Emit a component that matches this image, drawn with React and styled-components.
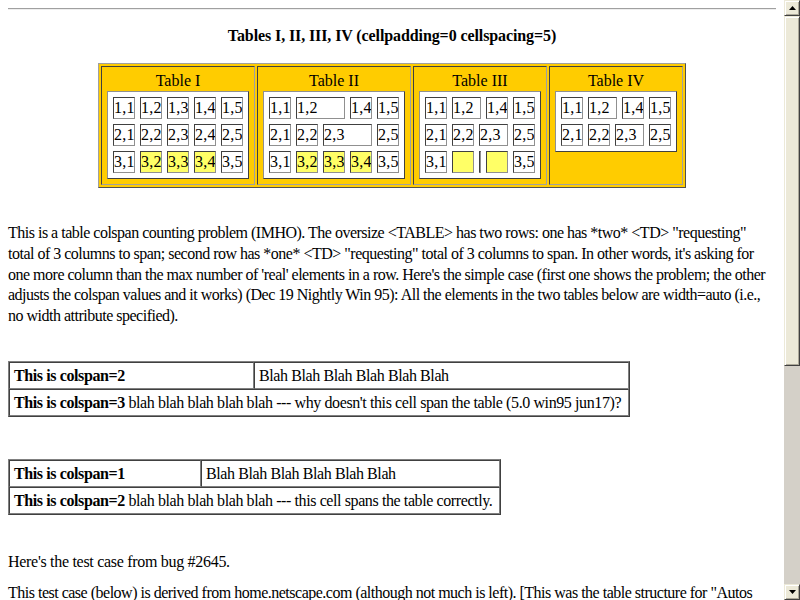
import React from 'react';
import styled, { createGlobalStyle } from 'styled-components';

const GlobalStyle = createGlobalStyle`
  *, *::before, *::after { box-sizing: border-box; }
  html, body { margin: 0; padding: 0; background: #fff; }
  body {
    font-family: "Liberation Serif", "Times New Roman", serif;
    font-size: 16px;
    color: #000;
  }
`;

const Window = styled.div`
  width: 800px;
  height: 600px;
  display: flex;
  overflow: hidden;
  background: #fff;
`;

const Page = styled.div`
  flex: 1;
  min-width: 0;
  padding: 8px;
  overflow: hidden;
  letter-spacing: -0.4px;
`;

const Rule = styled.div`
  height: 2px;
  border-top: 1px solid #a0a0a0;
  border-bottom: 1px solid #eeeeee;
`;

const Title = styled.h3`
  margin: 16px 0 0;
  font-size: 16px;
  line-height: 20px;
  text-align: center;
  font-weight: bold;
  letter-spacing: -0.1px;
`;

/* the big yellow table holding tables I..IV */
const Showcase = styled.div`
  display: flex;
  gap: 2px;
  width: fit-content;
  margin: 17px auto 0;
  padding: 2px;
  background: #ffcc00;
  border: 1px solid;
  border-color: #a0a0a0 #505050 #505050 #a0a0a0;
`;

const Panel = styled.div`
  display: flex;
  flex-direction: column;
  align-items: center;
  padding: 4px 5px 5px;
  border: 1px solid;
  border-color: #404040 #a0a0a0 #a0a0a0 #404040;
`;

const Caption = styled.div`
  line-height: 20px;
  letter-spacing: 0;
`;

const Grid = styled.div`
  display: grid;
  grid-template-columns: ${p => p.$cols};
  grid-auto-rows: 22px;
  gap: 5px;
  padding: 5px;
  background: #fff;
  border: 1px solid;
  border-color: #909090 #404040 #404040 #909090;
`;

const Cell = styled.div`
  grid-column: span ${p => p.$span || 1};
  background: ${p => (p.$hot ? '#ffff66' : '#fff')};
  border: 1px solid;
  border-color: #404040 #909090 #909090 #404040;
  line-height: 20px;
  letter-spacing: 0.2px;
  white-space: nowrap;
  overflow: hidden;
`;

const Para = styled.p`
  margin: ${p => p.$top}px 0 0;
  line-height: 20.75px;
  letter-spacing: ${p => (p.$tight ? '-0.5px' : '-0.3px')};
  white-space: ${p => (p.$tight ? 'nowrap' : 'normal')};
`;

/* the two colspan test tables */
const Sheet = styled.div`
  display: grid;
  grid-template-columns: ${p => p.$cols};
  width: fit-content;
  margin-top: ${p => p.$top}px;
  border: 1px solid;
  border-color: #808080 #404040 #404040 #808080;
`;

const SheetCell = styled.div`
  grid-column: span ${p => p.$span || 1};
  padding: 2px 4px;
  line-height: 21px;
  white-space: nowrap;
  border: 1px solid;
  border-color: #404040 #808080 #808080 #404040;
`;

const Scrollbar = styled.div`
  width: 16px;
  flex: none;
  display: flex;
  flex-direction: column;
  background: #d4d0c8;
`;

const ArrowButton = styled.div`
  height: 16px;
  flex: none;
  display: flex;
  align-items: center;
  justify-content: center;
  background: #ece9d8;
  border: 1px solid;
  border-color: #ece9d8 #404040 #404040 #ece9d8;
  box-shadow: inset 1px 1px #fff, inset -1px -1px #aca899;
`;

const Thumb = styled.div`
  height: 350px;
  flex: none;
  background: #ece9d8;
  border: 1px solid;
  border-color: #ece9d8 #404040 #404040 #ece9d8;
  box-shadow: inset 1px 1px #fff, inset -1px -1px #aca899;
`;

const Track = styled.div`
  flex: 1;
`;

const Arrow = ({ down }) => (
  <svg width="7" height="4" viewBox="0 0 7 4">
    <path d={down ? 'M0 0h7L3.5 4z' : 'M3.5 0L7 4H0z'} fill="#000" />
  </svg>
);

const hot = ['3,2', '3,3', '3,4'];
const five = r => [1, 2, 3, 4, 5].map(c => ({ t: `${r},${c}` }));

const tables = [
  {
    name: 'Table I',
    cols: '22px 22px 22px 22px 22px',
    rows: [five(1), five(2), five(3)],
  },
  {
    name: 'Table II',
    cols: '22px 22px 22px 22px 22px',
    rows: [
      [{ t: '1,1' }, { t: '1,2', span: 2 }, { t: '1,4' }, { t: '1,5' }],
      [{ t: '2,1' }, { t: '2,2' }, { t: '2,3', span: 2 }, { t: '2,5' }],
      five(3),
    ],
  },
  {
    name: 'Table III',
    cols: '22px 22px 2px 22px 22px',
    rows: [
      [{ t: '1,1' }, { t: '1,2', span: 2 }, { t: '1,4' }, { t: '1,5' }],
      [{ t: '2,1' }, { t: '2,2' }, { t: '2,3', span: 2 }, { t: '2,5' }],
      [{ t: '3,1' }, { t: '', hot: true }, { t: '' }, { t: '', hot: true }, { t: '3,5' }],
    ],
  },
  {
    name: 'Table IV',
    cols: '22px 22px 2px 22px 22px',
    rows: [
      [{ t: '1,1' }, { t: '1,2', span: 2 }, { t: '1,4' }, { t: '1,5' }],
      [{ t: '2,1' }, { t: '2,2' }, { t: '2,3', span: 2 }, { t: '2,5' }],
    ],
  },
];

export default function App() {
  return (
    <>
      <GlobalStyle />
      <Window>
        <Page>
          <Rule />
          <Title>Tables I, II, III, IV (cellpadding=0 cellspacing=5)</Title>

          <Showcase>
            {tables.map(tb => (
              <Panel key={tb.name}>
                <Caption>{tb.name}</Caption>
                <Grid $cols={tb.cols}>
                  {tb.rows.flat().map((c, i) => (
                    <Cell key={i} $span={c.span} $hot={c.hot || hot.includes(c.t)}>
                      {c.t}
                    </Cell>
                  ))}
                </Grid>
              </Panel>
            ))}
          </Showcase>

          <Para $top={35} $tight>
            This is a table colspan counting problem (IMHO). The oversize &lt;TABLE&gt; has two rows: one
            has *two* &lt;TD&gt; "requesting"
            <br />
            total of 3 columns to span; second row has *one* &lt;TD&gt; "requesting" total of 3 columns to
            span. In other words, it's asking for
            <br />
            one more column than the max number of 'real' elements in a row. Here's the simple case (first
            one shows the problem; the other
            <br />
            adjusts the colspan values and it works) (Dec 19 Nightly Win 95): All the elements in the two
            tables below are width=auto (i.e.,
            <br />
            no width attribute specified).
          </Para>

          <Sheet $cols="245px 375px" $top={34}>
            <SheetCell><b>This is colspan=2</b></SheetCell>
            <SheetCell>Blah Blah Blah Blah Blah Blah</SheetCell>
            <SheetCell $span={2}>
              <b>This is colspan=3</b> blah blah blah blah blah --- why doesn't this cell span the table
              (5.0 win95 jun17)?
            </SheetCell>
          </Sheet>

          <Sheet $cols="192px 299px" $top={42}>
            <SheetCell><b>This is colspan=1</b></SheetCell>
            <SheetCell>Blah Blah Blah Blah Blah Blah</SheetCell>
            <SheetCell $span={2}>
              <b>This is colspan=2</b> blah blah blah blah blah --- this cell spans the table correctly.
            </SheetCell>
          </Sheet>

          <Para $top={37}>Here's the test case from bug #2645.</Para>
          <Para $top={10} $tight>
            This test case (below) is derived from home.netscape.com (although not much is left). [This
            was the table structure for "Autos
            <br />
            &amp; Classifieds" and the other channel links.]
          </Para>
        </Page>

        <Scrollbar>
          <ArrowButton><Arrow /></ArrowButton>
          <Thumb />
          <Track />
          <ArrowButton><Arrow down /></ArrowButton>
        </Scrollbar>
      </Window>
    </>
  );
}
